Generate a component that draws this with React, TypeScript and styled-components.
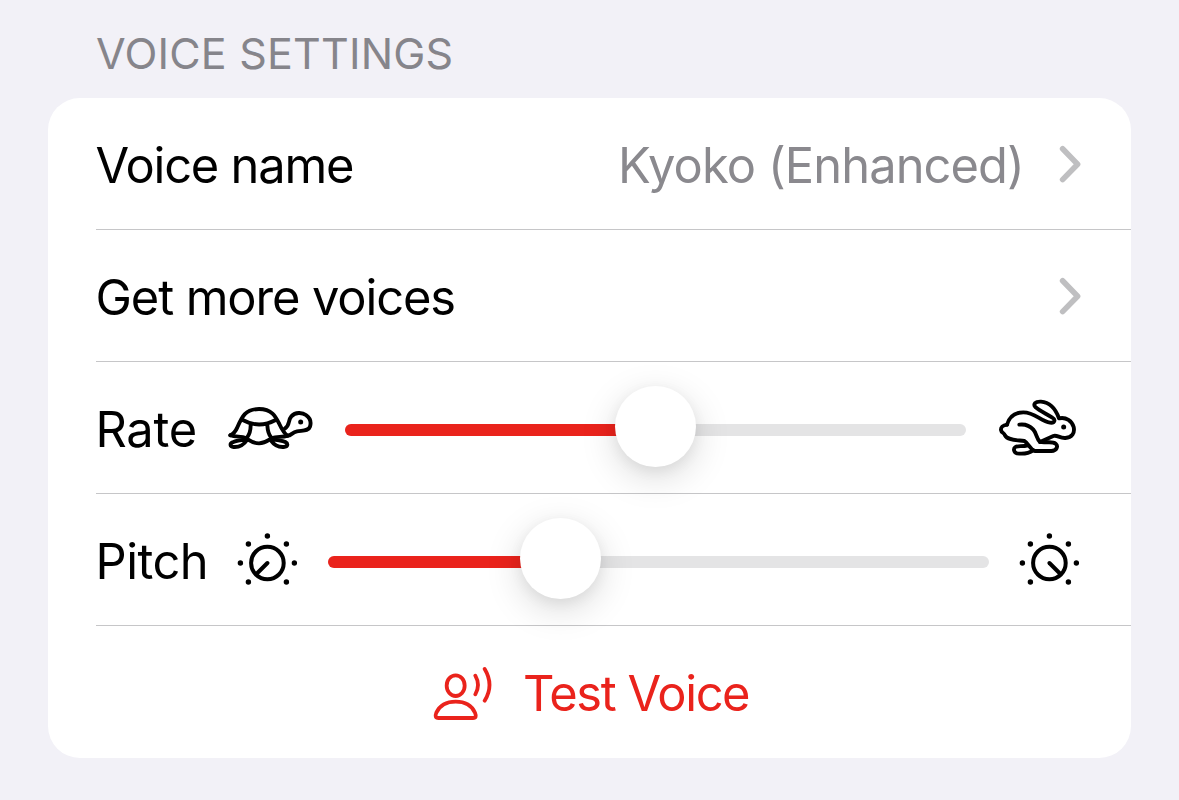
import React from 'react';
import styled, { createGlobalStyle } from 'styled-components';

const GlobalStyle = createGlobalStyle`
  body { margin: 0; background: #f2f1f7; font-family: Inter, "Liberation Sans", sans-serif; }
  svg { display: block; flex: none; }
`;

const Page = styled.main`
  box-sizing: border-box;
  height: 800px;
  padding: 26px 48px 0;
  overflow: hidden;
`;
const Heading = styled.h2`
  margin: 0;
  height: 72px;
  padding-left: 48px;
  font-size: 43px;
  line-height: 54px;
  font-weight: 400;
  letter-spacing: 0.2px;
  color: #86858b;
  white-space: nowrap;
`;
const Card = styled.section`
  height: 660px;
  border-radius: 32px;
  background: #fff;
  overflow: hidden;
`;
const Row = styled.div<{ $end?: number }>`
  box-sizing: border-box;
  display: flex;
  align-items: center;
  height: 132px;
  margin-left: 48px;
  padding-right: ${(p) => p.$end ?? 50}px;
  border-bottom: 1px solid #c6c6c8;
`;
const Label = styled.span<{ $spacing: number; $width?: number }>`
  width: ${(p) => (p.$width ? `${p.$width}px` : 'auto')};
  padding-top: 5px;
  margin-left: -0.5px;
  font-size: 48.8px;
  line-height: 60px;
  letter-spacing: ${(p) => p.$spacing}px;
  white-space: nowrap;
  color: #000;
`;
const Value = styled(Label)`
  margin-left: auto;
  margin-right: 35px;
  color: #8a898e;
`;
const Push = styled.div`
  margin-left: auto;
`;
const Track = styled.div<{ $left: number; $right: number }>`
  flex: 1;
  display: flex;
  align-items: center;
  height: 12px;
  margin: 5px ${(p) => p.$right}px 0 ${(p) => p.$left}px;
  border-radius: 6px;
  background: #e4e4e5;
`;
const Fill = styled.div<{ $width: number }>`
  width: ${(p) => p.$width}px;
  height: 12px;
  border-radius: 6px 0 0 6px;
  background: #ea231c;
`;
const Thumb = styled.div`
  position: relative;
  top: -3.5px;
  width: 81px;
  height: 81px;
  margin-left: -40.5px;
  border-radius: 50%;
  background: #fff;
  box-shadow: 0 10px 36px rgba(0, 0, 0, 0.15), 0 4px 14px rgba(0, 0, 0, 0.06);
`;
const Action = styled.button`
  display: flex;
  align-items: center;
  width: 100%;
  height: 132px;
  padding: 0 0 0 385px;
  border: 0;
  background: none;
  font-family: inherit;
`;
const ActionLabel = styled(Label)`
  margin-left: 30px;
  padding-top: 3px;
  color: #ea231c;
`;
const Shift = styled.div<{ $left?: number; $top?: number }>`
  flex: none;
  margin-left: ${(p) => p.$left ?? 0}px;
  margin-top: ${(p) => p.$top ?? 0}px;
`;

const line = { fill: 'none', strokeLinecap: 'round', strokeLinejoin: 'round' } as const;

const Chevron = () => (
  <svg width="22" height="38" viewBox="0 0 22 38" {...line} stroke="#bfbfc1" strokeWidth="5.6">
    <path d="M3.6 3.8 18.6 19.2 3.6 34.6" />
  </svg>
);

const Turtle = () => (
  <svg width="86" height="48" viewBox="38 39 258 144" {...line} stroke="#000" strokeWidth="11.6">
    <path d="M45 136C57 131 61 123 66 112C80 80 90 57 131 57C170 57 181 80 192 102C199 117 206 131 217 137" />
    <path d="M45 136C61 143 78 137 91 144C105 152 111 160 131 160C151 160 158 151 170 144C184 138 201 143 217 137" />
    <path d="M82 90Q131 117 181 90M106 106C106 124 102 134 95 143M156 106C157 124 160 134 168 143" />
    <path d="M208 116C225 107 217 91 228 79C240 66 260 66 273 76C287 86 287 100 284 110C280 124 261 121 245 124C230 127 228 137 217 137" />
    <path d="M95 150C85 165 70 172 55 171C43 170 43 161 52 157C62 151 77 151 91 148M167 152C177 166 189 172 205 171C218 170 219 161 210 156C200 151 187 152 174 148" />
    <circle cx="256" cy="96" r="7.5" fill="#000" stroke="none" />
  </svg>
);

const Rabbit = () => (
  <svg width="80" height="57" viewBox="39 27 240 171" {...line} stroke="#000" strokeWidth="11.6">
    <path d="M66 104C73 80 90 67 115 67C150 67 168 95 195 98C210 100 212 89 202 83C185 72 163 62 151 51C143 43 151 34 168 35C197 37 213 60 222 85C244 80 261 94 266 111C270 129 261 143 241 144C224 145 216 134 205 138L165 156" />
    <path d="M66 104C53 106 47 113 48 120C49 129 57 127 60 136C67 151 94 150 118 153C132 161 134 178 149 183L199 183C216 182 220 168 212 161C201 152 180 160 165 156C154 146 155 130 145 119C135 108 119 102 103 104" />
    <path d="M145 181C130 191 112 192 96 190C85 187 85 175 91 171C98 166 113 171 128 166" />
    <circle cx="236" cy="111" r="7.5" fill="#000" stroke="none" />
  </svg>
);

const Dial = ({ high = false }: { high?: boolean }) => (
  <svg width="60" height="60" viewBox="-30.4 -30 60 60" {...line} stroke="#000" strokeWidth="4">
    <circle r="16.3" />
    <path d={high ? 'M0 0 11 11' : 'M0 0-11 11'} />
    <g fill="#000" stroke="none">
      {[[0, -27], [-19, -19], [19, -19], [-27, 0], [27, 0], [-19, 19], [19, 19]].map(([x, y]) => (
        <circle key={`${x},${y}`} cx={x} cy={y} r="2.7" />
      ))}
    </g>
  </svg>
);

const Speaker = () => (
  <svg width="60" height="54" viewBox="24 30 180 162" {...line} stroke="#ea231c" strokeWidth="11.4">
    <ellipse cx="92" cy="89" rx="27" ry="31" />
    <path d="M41 186H144C153 186 154 180 150 170C140 148 118 137 92 137C66 137 44 149 34 170C30 180 31 186 41 186Z" />
    <path d="M151 59Q167 87 151 115M179 39Q208 87 179 134" />
  </svg>
);

export default function App() {
  return (
    <>
      <GlobalStyle />
      <Page>
        <Heading>VOICE SETTINGS</Heading>
        <Card>
          <Row>
            <Label $spacing={-1.2}>Voice name</Label>
            <Value $spacing={-0.9}>Kyoko (Enhanced)</Value>
            <Chevron />
          </Row>
          <Row>
            <Label $spacing={-1.1}>Get more voices</Label>
            <Push><Chevron /></Push>
          </Row>
          <Row $end={53}>
            <Label $spacing={-0.3} $width={132}>Rate</Label>
            <Shift $top={-1}><Turtle /></Shift>
            <Track $left={31.5} $right={32}>
              <Fill $width={310.5} />
              <Thumb />
            </Track>
            <Rabbit />
          </Row>
          <Row $end={52}>
            <Label $spacing={-0.5} $width={141.5}>Pitch</Label>
            <Shift $top={7}><Dial /></Shift>
            <Track $left={31} $right={30}>
              <Fill $width={232.5} />
              <Thumb />
            </Track>
            <Shift $top={7}><Dial high /></Shift>
          </Row>
          <Action>
            <Shift $top={1}><Speaker /></Shift>
            <ActionLabel $spacing={-1.4}>Test Voice</ActionLabel>
          </Action>
        </Card>
      </Page>
    </>
  );
}
